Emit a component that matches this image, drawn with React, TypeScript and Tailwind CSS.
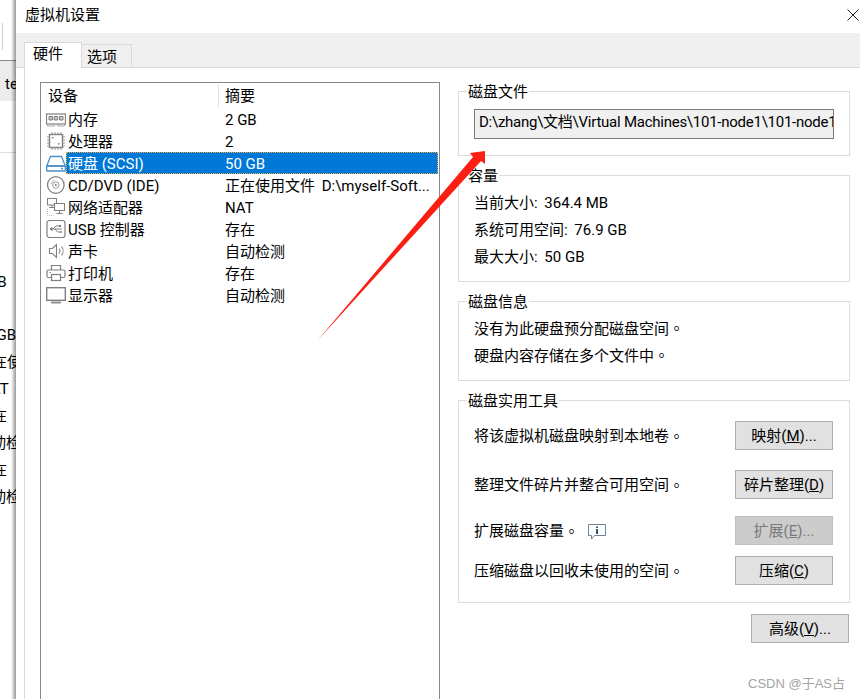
import React from "react";

const G = "#7f7f7f";

function Svg({ children }: { children: React.ReactNode }) {
  return (
    <svg viewBox="0 0 20 20" className="w-5 h-5 shrink-0" fill="none" stroke={G} strokeWidth="1">
      {children}
    </svg>
  );
}

const MemoryIcon = () => (
  <Svg>
    <rect x="0.5" y="5" width="19" height="10" strokeWidth="1.2" />
    <path d="M3 7.500h3.500v3.500H3zM8.200 7.500h3.500v3.500H8.200zM13.500 7.500h3.500v3.500h-3.500z" fill="#c4c4c4" />
    <path d="M1.500 15v2h7v-2M11.500 15v2h7v-2" stroke="#a8a8a8" />
  </Svg>
);
const CpuIcon = () => (
  <Svg>
    <rect x="3.5" y="3.5" width="13" height="13" strokeWidth="1.4" />
    <path d="M6 1v2M9 1v2M12 1v2M15 1v2M6 17v2M9 17v2M12 17v2M15 17v2M1 6h2M1 9h2M1 12h2M1 15h2M17 6h2M17 9h2M17 12h2M17 15h2" stroke="#9a9a9a" />
    <path d="M6 6h1.5v1.5H6zM12 12h1.5v1.5H12z" fill={G} stroke="none" />
  </Svg>
);
const DiskIcon = () => (
  <svg viewBox="0 0 20 20" className="w-5 h-5 shrink-0" fill="none" stroke="#4a90c8" strokeWidth="1.3">
    <path d="M4.5 3.5h11L19.3 13H.7z" />
    <rect x="0.7" y="13" width="18.6" height="5" rx="0.6" />
    <path d="M15 15.5h2" strokeWidth="1.4" />
  </svg>
);
const CdIcon = () => (
  <Svg>
    <circle cx="9.8" cy="10" r="8.3" strokeWidth="1.3" />
    <circle cx="9.8" cy="10" r="3.2" stroke="#9a9a9a" />
    <circle cx="9.8" cy="10" r="1" fill={G} stroke="none" />
    <path d="M5 9a5 5 0 0 1 3.6-3.8" stroke="#b5b5b5" />
  </Svg>
);
const NetIcon = () => (
  <Svg>
    <rect x="1.5" y="1.5" width="9" height="6.5" />
    <path d="M6 8v2M3 10.5h5" />
    <rect x="8.5" y="6.5" width="10" height="7" fill="#fff" />
    <path d="M13.5 13.5v2.5M10.5 16.5h6" />
    <path d="M1.5 12v6.5h6" stroke="#b5b5b5" strokeDasharray="1 1" />
  </Svg>
);
const UsbIcon = () => (
  <Svg>
    <rect x="1" y="1.5" width="18" height="17" rx="2.5" strokeWidth="1.2" />
    <path d="M4 10h12M7 10l3-3h3M9 10l2.500 3H14" />
    <path d="M4 10l2-1.500v3z" fill={G} />
    <rect x="13" y="6" width="2" height="2" fill={G} stroke="none" />
    <circle cx="15" cy="13" r="1" fill={G} stroke="none" />
  </Svg>
);
const SoundIcon = () => (
  <Svg>
    <path d="M3.500 7.500h3l4-4v13l-4-4h-3z" strokeWidth="1.1" />
    <path d="M13 7.500a4 4 0 0 1 0 5M15.500 5.500a7 7 0 0 1 0 9" stroke="#9a9a9a" strokeWidth="1.2" />
  </Svg>
);
const PrintIcon = () => (
  <Svg>
    <path d="M5.500 7V2.500h9V7" strokeWidth="1.2" />
    <path d="M5 14.500H2.500a1.500 1.500 0 0 1-1.500-1.500V8.500A1.500 1.500 0 0 1 2.500 7h15A1.500 1.500 0 0 1 19 8.500V13a1.500 1.500 0 0 1-1.500 1.500H15" strokeWidth="1.2" />
    <rect x="5.500" y="11.500" width="9" height="6" strokeWidth="1.2" />
    <path d="M3.500 9.500h1.500" />
  </Svg>
);
const MonitorIcon = () => (
  <Svg>
    <rect x="0.700" y="2.700" width="18.600" height="12.600" strokeWidth="1.400" />
    <path d="M5 17.500h10" stroke="#8f8f8f" strokeWidth="2" />
  </Svg>
);

const rows: { icon: React.ReactNode; name: string; sum: React.ReactNode; key: string; sel?: boolean }[] = [
  { key: "mem", icon: <MemoryIcon />, name: "内存", sum: "2 GB" },
  { key: "cpu", icon: <CpuIcon />, name: "处理器", sum: "2" },
  { key: "disk", icon: <DiskIcon />, name: "硬盘 (SCSI)", sum: "50 GB", sel: true },
  {
    key: "cd",
    icon: <CdIcon />,
    name: "CD/DVD (IDE)",
    sum: (
      <>
        正在使用文件 <span className="ml-[3px]">D:\myself-Soft...</span>
      </>
    ),
  },
  { key: "net", icon: <NetIcon />, name: "网络适配器", sum: "NAT" },
  { key: "usb", icon: <UsbIcon />, name: "USB 控制器", sum: "存在" },
  { key: "snd", icon: <SoundIcon />, name: "声卡", sum: "自动检测" },
  { key: "prn", icon: <PrintIcon />, name: "打印机", sum: "存在" },
  { key: "mon", icon: <MonitorIcon />, name: "显示器", sum: "自动检测" },
];

const Stop = () => <span className="font-['Noto_Sans_CJK_TC',sans-serif]">。</span>;

function Group({ title, className, children }: { title: string; className: string; children?: React.ReactNode }) {
  return (
    <div className={`border border-[#dcdcdc] ${className}`}>
      <div className="-mt-[10px] ml-2 w-fit bg-white px-px h-5 leading-5">{title}</div>
      {children}
    </div>
  );
}

function Btn({ label, k, after, disabled, className = "" }: { label: string; k: string; after: string; disabled?: boolean; className?: string }) {
  return (
    <div
      className={`w-[98px] h-[29px] shrink-0 border flex items-center justify-center pt-px ${
        disabled ? "bg-[#cccccc] border-[#bfbfbf] text-[#7a7a7a]" : "bg-[#e1e1e1] border-[#adadad] text-black"
      } ${className}`}
    >
      <span>
        {label}(<span className="underline">{k}</span>){after}
      </span>
    </div>
  );
}

function ToolRow({ text, className = "", children }: { text: React.ReactNode; className?: string; children: React.ReactNode }) {
  return (
    <div className={`flex items-center justify-between pl-[15px] pr-4 ${className}`}>
      <div className="flex items-center pt-[2px]">{text}</div>
      {children}
    </div>
  );
}

const sideRows: { t: string; c: string }[] = [
  { t: "50 GB", c: "-ml-[24px]" },
  { t: "正在使用文件", c: "-ml-[23px]" },
  { t: "NAT", c: "-ml-[20px]" },
  { t: "存在", c: "-ml-[23px]" },
  { t: "自动检测", c: "-ml-[24px]" },
  { t: "存在", c: "-ml-[23px]" },
  { t: "自动检测", c: "-ml-[24px]" },
];

export default function App() {
  return (
    <div className="relative flex w-[860px] h-[699px] overflow-hidden bg-white text-black text-[15px] font-['Roboto','Noto_Sans_CJK_SC',sans-serif]">
      {/* sliver of the window behind */}
      <div className="relative w-4 shrink-0 overflow-hidden whitespace-nowrap">
        <div className="h-[60px] pt-[23px] pl-[2px]">
          <div className="w-px h-[27px] bg-[#cfcfcf]" />
        </div>
        <div className="h-[41px] border-t border-[#8c8c8c] bg-[#ececec] flex items-center pl-[5px] pt-[7px]">te</div>
        <div className="h-[52px] border-b border-[#dedede]" />
        <div className="h-[118px]" />
        <div className="h-[22px] leading-[22px] -ml-[25px]">2 GB</div>
        <div className="h-[29px]" />
        {sideRows.map((r, i) => (
          <div key={i} className={`h-[27px] leading-[27px] ${r.c}`}>
            {r.t}
          </div>
        ))}
        <div className="absolute right-0 inset-y-0 w-[5px] bg-gradient-to-r from-transparent to-black/40" />
      </div>

      {/* window */}
      <div className="flex-1 flex flex-col min-w-0">
        <div className="h-[33px] shrink-0 flex items-center justify-between pl-[9px] pr-[1px] pb-[3px]">
          <span>虚拟机设置</span>
          <svg viewBox="0 0 12 12" className="w-3 h-3" fill="none" stroke="#222" strokeWidth="1">
            <path d="M0.500 0.500l11 11M11.500 0.500l-11 11" />
          </svg>
        </div>
        <div className="h-[35px] shrink-0 bg-[#f0f0f0] border-b border-[#d9d9d9] flex items-end pl-2">
          <div className="relative -mb-px w-[58px] h-[26px] bg-white border border-b-0 border-[#d9d9d9] pl-2 pb-[2px] flex items-center">
            硬件
          </div>
          <div className="w-[50px] h-[23px] border border-l-0 border-b-0 border-[#d9d9d9] pl-[5px] flex items-center pt-[3px]">
            选项
          </div>
        </div>
        <div className="flex-1 min-h-0 ml-2 border-l border-[#d9d9d9] bg-white flex pl-[15px] pt-[14px]">
          {/* list */}
          <div className="w-[400px] h-[640px] shrink-0 border border-[#828790]">
            <div className="flex h-[25px] items-center pl-[7px]">
              <div className="w-[171px] h-6 flex items-center border-r border-[#e5e5e5] pt-[2px]">设备</div>
              <div className="pl-[6px] pt-[2px]">摘要</div>
            </div>
            {rows.map((r) => (
              <div key={r.key} className="flex h-[22px] items-center pl-[5px] pr-px">
                {r.icon}
                <div
                  className={`flex-1 h-full flex items-center whitespace-nowrap pt-[3px] ${
                    r.sel ? "bg-[#0078d7] text-white border border-dotted border-[#f0a848]" : ""
                  }`}
                >
                  <div className={`w-[159px] shrink-0 ${r.sel ? "pl-px" : "pl-[2px]"}`}>{r.name}</div>
                  <div className={r.sel ? "-ml-px" : ""}>{r.sum}</div>
                </div>
              </div>
            ))}
          </div>

          {/* right column */}
          <div className="ml-[18px] w-[392px] shrink-0 pt-[9px]">
            <Group title="磁盘文件" className="h-[65px]">
              <div className="mx-[15px] mt-[7px] h-[30px] border border-[#7a7a7a] bg-[#f0f0f0] pl-1 pb-[3px] flex items-center overflow-hidden whitespace-nowrap tracking-[-0.25px]">
                D:\zhang\文档\Virtual Machines\101-node1\101-node1
              </div>
            </Group>
            <Group title="容量" className="h-[107px] mt-[19px]">
              <div className="pl-[15px] flex flex-col">
                <div className="h-[27px] leading-[27px] mt-[4px]">
                  当前大小:<span className="ml-[3px]"> 364.4 MB</span>
                </div>
                <div className="h-[27px] leading-[27px]">
                  系统可用空间:<span className="ml-[3px]"> 76.9 GB</span>
                </div>
                <div className="h-[27px] leading-[27px]">
                  最大大小:<span className="ml-[3px]"> 50 GB</span>
                </div>
              </div>
            </Group>
            <Group title="磁盘信息" className="h-[80px] mt-[19px]">
              <div className="pl-[15px] flex flex-col">
                <div className="h-[27px] leading-[27px] mt-[2px]">
                  没有为此硬盘预分配磁盘空间<Stop />
                </div>
                <div className="h-[27px] leading-[27px]">
                  硬盘内容存储在多个文件中<Stop />
                </div>
              </div>
            </Group>
            <Group title="磁盘实用工具" className="h-[203px] mt-[19px]">
              <div className="pt-[10px]">
                <ToolRow
                  text={
                    <>
                      将该虚拟机磁盘映射到本地卷<Stop />
                    </>
                  }
                >
                  <Btn label="映射" k="M" after="..." />
                </ToolRow>
                <ToolRow
                  text={
                    <>
                      整理文件碎片并整合可用空间<Stop />
                    </>
                  }
                  className="mt-5"
                >
                  <Btn label="碎片整理" k="D" after="" />
                </ToolRow>
                <ToolRow
                  className="mt-[17px]"
                  text={
                    <>
                      扩展磁盘容量<Stop />
                      <svg viewBox="0 0 18 16" className="w-[18px] h-4 ml-[9px]" fill="none">
                        <path d="M0.500 0.500h17v11h-11l-3 3.500v-3.500h-3z" stroke="#6f8294" strokeWidth="1" />
                        <path d="M8 2.500h2v1.500H8zM8 5h2v5H8z" fill="#33526e" />
                      </svg>
                    </>
                  }
                >
                  <Btn label="扩展" k="E" after="..." disabled />
                </ToolRow>
                <ToolRow
                  text={
                    <>
                      压缩磁盘以回收未使用的空间<Stop />
                    </>
                  }
                  className="mt-[11px]"
                >
                  <Btn label="压缩" k="C" after="" />
                </ToolRow>
              </div>
            </Group>
            <div className="flex justify-end mt-[11px] pr-px">
              <Btn label="高级" k="V" after="..." />
            </div>
          </div>
        </div>
      </div>

      {/* red annotation arrow */}
      <svg viewBox="0 0 860 699" className="absolute inset-0 w-[860px] h-[699px] pointer-events-none">
        <polygon points="317,341 473,157 470,153 485,151 485,164 481,161" fill="#fb1e12" />
      </svg>
      <div className="absolute right-[15px] bottom-[6px] text-[13px] text-[#a3a3a3] font-['Liberation_Sans','Noto_Sans_CJK_SC',sans-serif]">
        CSDN @于AS占
      </div>
    </div>
  );
}
